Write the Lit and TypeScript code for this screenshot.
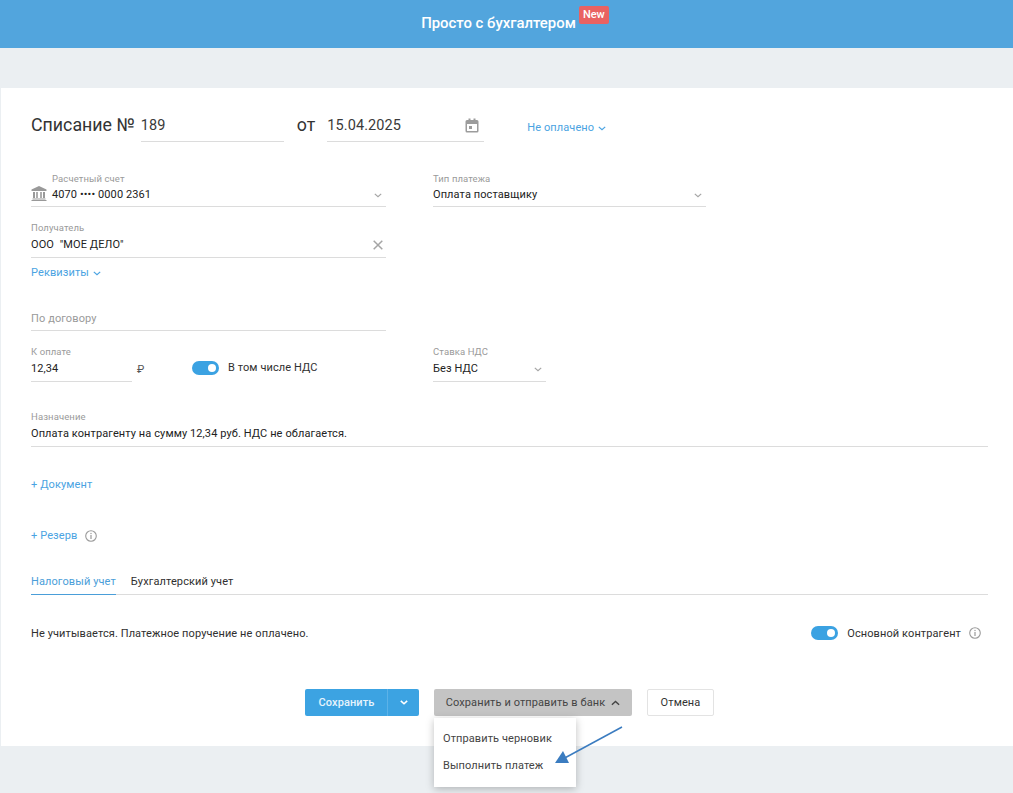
import { LitElement, html, css, svg } from "lit";
import { customElement } from "lit/decorators.js";

const chev = (cls: string) => html`<svg class=${cls} viewBox="0 0 10 6" width="8" height="5"><path d="M1 1l4 3.600L9 1" fill="none" stroke="currentColor" stroke-width="1.500"/></svg>`;
const info = html`<svg class="info" viewBox="0 0 12 12" width="12" height="12"><circle cx="6" cy="6" r="5.300" fill="none" stroke="#9b9b9b" stroke-width="1.100"/><rect x="5.400" y="5" width="1.200" height="4" fill="#9b9b9b"/><rect x="5.400" y="2.900" width="1.200" height="1.200" fill="#9b9b9b"/></svg>`;

@customElement("app-root")
export class AppRoot extends LitElement {
  static styles = css`
    :host { display: block; height: 793px; overflow: hidden; background: #ebeff2; font-family: Roboto, "Noto Sans", sans-serif; font-size: 11px; color: #2f2f2f; position: relative; letter-spacing: 0.1px; }
    * { box-sizing: border-box; }
    .top { height: 48px; background: #52a5dd; display: flex; justify-content: center; color: #fff; font-size: 14.900px; font-weight: 500; letter-spacing: 0; padding-left: 17px; }
    .top .name { margin-top: 14px; line-height: 18px; }
    .new { margin: 6px 0 0 3px; width: 30px; height: 18px; background: #e96262; border-radius: 2px; font-size: 11px; line-height: 17px; text-align: center; font-weight: 500; }
    .card { margin: 40px 0 0 1px; height: 658px; background: #fff; padding: 22px 25px 0 30px; position: relative; }
    .title { display: flex; height: 32px; font-size: 14.500px; letter-spacing: 0.1px; }
    .h { font-size: 17.800px; letter-spacing: 0; line-height: 30px; color: #333; }
    .ti { height: 32px; border-bottom: 1px solid #dcdcdc; line-height: 33px; color: #3a3a3a; display: flex; justify-content: space-between; align-items: center; }
    .ti.num { width: 143px; margin-left: 6px; }
    .ot { margin-left: 13px; }
    .ti.date { width: 157px; margin-left: 12px; padding-right: 5px; }
    .status { margin-left: 43px; font-size: 11px; color: #4aa3e2; line-height: 36px; }
    .status svg, .link svg { margin-left: 1px; vertical-align: 0; }
    .row { display: flex; align-items: flex-start; }
    .field { display: block; border-bottom: 1px solid #dcdcdc; position: relative; }
    .lbl { font-size: 9.500px; line-height: 12px; color: #9a9a9a; height: 12px; }
    .val { font-size: 11px; line-height: 18px; height: 18px; display: flex; justify-content: space-between; align-items: center; color: #222; }
    .val svg.c { color: #a5a5a5; margin-right: 4px; }
    .w1 { width: 355px; }
    .w2 { width: 273px; margin-left: 47px; }
    .acc { margin-top: 31px; height: 34px; padding-left: 21px; }
    .acc.plain { padding-left: 0; }
    .acc .val { margin-top: 1px; }
    .rec { margin-top: 15px; height: 36px; }
    .rec .val { margin-top: 2px; }
    .rec .clear { margin-right: 3px; }
    .bank { position: absolute; left: 0; top: 13px; }
    .link { color: #4aa3e2; font-size: 11px; line-height: 16px; display: block; }
    .details { margin-top: 7px; }
    .contract { margin-top: 17px; height: 33px; padding-top: 12px; color: #9a9a9a; line-height: 18px; }
    .pay { margin-top: 15px; }
    .sum { width: 101px; height: 36px; }
    .pay .val { margin-top: 2px; }
    .rub { width: 60px; padding: 15px 0 0 5px; font-size: 11px; line-height: 18px; color: #555; }
    .sw { width: 27px; height: 14px; border-radius: 7px; background: #3ba2e2; position: relative; display: block; flex: none; }
    .sw::after { content: ""; position: absolute; right: 3px; top: 3px; width: 8px; height: 8px; border-radius: 50%; background: #fff; }
    .nds { display: flex; align-items: center; gap: 9px; margin-top: 13px; width: 241px; height: 18px; }
    .nds .txt { margin-top: -1px; }
    .rate { width: 113px; height: 36px; }
    .purpose { margin-top: 29px; width: 957px; height: 36px; }
    .purpose .val { margin-top: 2px; }
    .add1 { margin-top: 30px; }
    .add2 { margin-top: 35px; display: flex; align-items: center; gap: 8px; }
    .tabs { margin-top: 27px; width: 957px; height: 24px; border-bottom: 1px solid #dcdcdc; display: flex; gap: 15px; line-height: 21px; }
    .tab { height: 24px; }
    .tab.on { color: #4a9ed9; border-bottom: 1px solid #4a9ed9; }
    .foot { display: flex; justify-content: space-between; align-items: center; margin-top: 29px; height: 18px; padding-right: 7px; width: 957px; }
    .main { display: flex; align-items: center; gap: 9px; }
    .main .info { margin-left: -1px; }
    .actions { display: flex; margin: 47px 0 0 274px; height: 27px; }
    .btn { height: 27px; border-radius: 2px; display: flex; align-items: center; justify-content: center; font-weight: 500; font-size: 11px; }
    .save { width: 114px; background: #3ca3e2; color: #e6f3fc; border-radius: 2px; display: flex; }
    .save .a { width: 83px; text-align: center; line-height: 27px; border-right: 1px solid #5cb2e8; padding-left: 1px; font-weight: 500; }
    .save .b { flex: 1; display: flex; align-items: center; justify-content: center; }
    .send { width: 198px; margin-left: 15px; background: #c4c4c4; color: #444; gap: 6px; font-weight: 400; }
    .cancel { width: 67px; margin-left: 15px; background: #fff; border: 1px solid #e3e3e3; color: #333; font-weight: 400; }
    .menu { position: absolute; left: 433px; top: 630px; width: 142px; height: 69px; background: #fff; box-shadow: 0 2px 8px rgba(0,0,0,.25); padding-top: 11px; color: #444; line-height: 20px; z-index: 2; }
    .menu div { padding-left: 9px; height: 21px; margin-bottom: 6px; }
    .arrow { position: absolute; left: 540px; top: 632px; z-index: 3; }
  `;

  render() {
    return html`
      <div class="top"><span class="name">Просто с бухгалтером</span><span class="new">New</span></div>
      <div class="card">
        <div class="title">
          <span class="h">Списание №</span>
          <span class="ti num">189</span>
          <span class="h ot">от</span>
          <span class="ti date">15.04.2025
            <svg viewBox="0 0 14 15" width="14" height="15"><path fill="#9c9c9c" d="M2 2h1.500V.5h2V2h3V.5h2V2H12a1.500 1.500 0 0 1 1.500 1.500V13a1.500 1.500 0 0 1-1.500 1.500H2A1.500 1.500 0 0 1 .5 13V3.500A1.500 1.500 0 0 1 2 2zm0 4v7h10V6z"/><rect x="4" y="8" width="3" height="3" fill="#9c9c9c"/></svg>
          </span>
          <span class="status">Не оплачено ${chev("")}</span>
        </div>
        <div class="row">
          <div class="field w1 acc">
            <svg class="bank" viewBox="0 0 16 15" width="16" height="15">${svg`<path fill="#999" d="M8 0L15.500 3.500V5H.5V3.500zM2 6h2v6H2zM5.200 6h1.600v6H5.200zM9.200 6h1.600v6H9.200zM12 6h2v6h-2zM1.500 12.500h13V13.500h-13zM.5 14h15v1H.5z"/>`}</svg>
            <div class="lbl">Расчетный счет</div>
            <div class="val"><span>4070 •••• 0000 2361</span>${chev("c")}</div>
          </div>
          <div class="field w2 acc plain">
            <div class="lbl">Тип платежа</div>
            <div class="val"><span>Оплата поставщику</span>${chev("c")}</div>
          </div>
        </div>
        <div class="field w1 rec">
          <div class="lbl">Получатель</div>
          <div class="val"><span>ООО&nbsp; "МОЕ ДЕЛО"</span>
            <svg class="clear" viewBox="0 0 10 10" width="10" height="10"><path d="M.7.7l8.600 8.600M9.300.7L.7 9.300" stroke="#a5a5a5" stroke-width="1.500" fill="none"/></svg></div>
        </div>
        <a class="link details">Реквизиты ${chev("")}</a>
        <div class="field w1 contract">По договору</div>
        <div class="row pay">
          <div class="field sum"><div class="lbl">К оплате</div><div class="val">12,34</div></div>
          <div class="rub">₽</div>
          <div class="nds"><span class="sw"></span><span class="txt">В том числе НДС</span></div>
          <div class="field rate"><div class="lbl">Ставка НДС</div><div class="val"><span>Без НДС</span>${chev("c")}</div></div>
        </div>
        <div class="field purpose"><div class="lbl">Назначение</div><div class="val">Оплата контрагенту на сумму 12,34 руб. НДС не облагается.</div></div>
        <a class="link add1">+ Документ</a>
        <div class="add2"><a class="link">+ Резерв</a>${info}</div>
        <div class="tabs"><span class="tab on">Налоговый учет</span><span class="tab">Бухгалтерский учет</span></div>
        <div class="foot"><span>Не учитывается. Платежное поручение не оплачено.</span>
          <span class="main"><span class="sw"></span><span>Основной контрагент</span>${info}</span></div>
        <div class="actions">
          <div class="save"><span class="a">Сохранить</span><span class="b"><svg viewBox="0 0 10 6" width="8" height="5"><path d="M1 1l4 3.600L9 1" fill="none" stroke="#fff" stroke-width="2"/></svg></span></div>
          <div class="btn send">Сохранить и отправить в банк <svg viewBox="0 0 10 6" width="9" height="6"><path d="M1 5l4-3.600L9 5" fill="none" stroke="#444" stroke-width="1.600"/></svg></div>
          <div class="btn cancel">Отмена</div>
        </div>
        <div class="menu"><div>Отправить черновик</div><div>Выполнить платеж</div></div>
        <svg class="arrow" width="84" height="46" viewBox="0 0 84 46">${svg`<path d="M81 7L20 40" stroke="#3b7cc0" stroke-width="1.500" fill="none"/><path d="M14 43L22 31 25 37 28 43z" fill="#3b7cc0"/>`}</svg>
      </div>
    `;
  }
}
